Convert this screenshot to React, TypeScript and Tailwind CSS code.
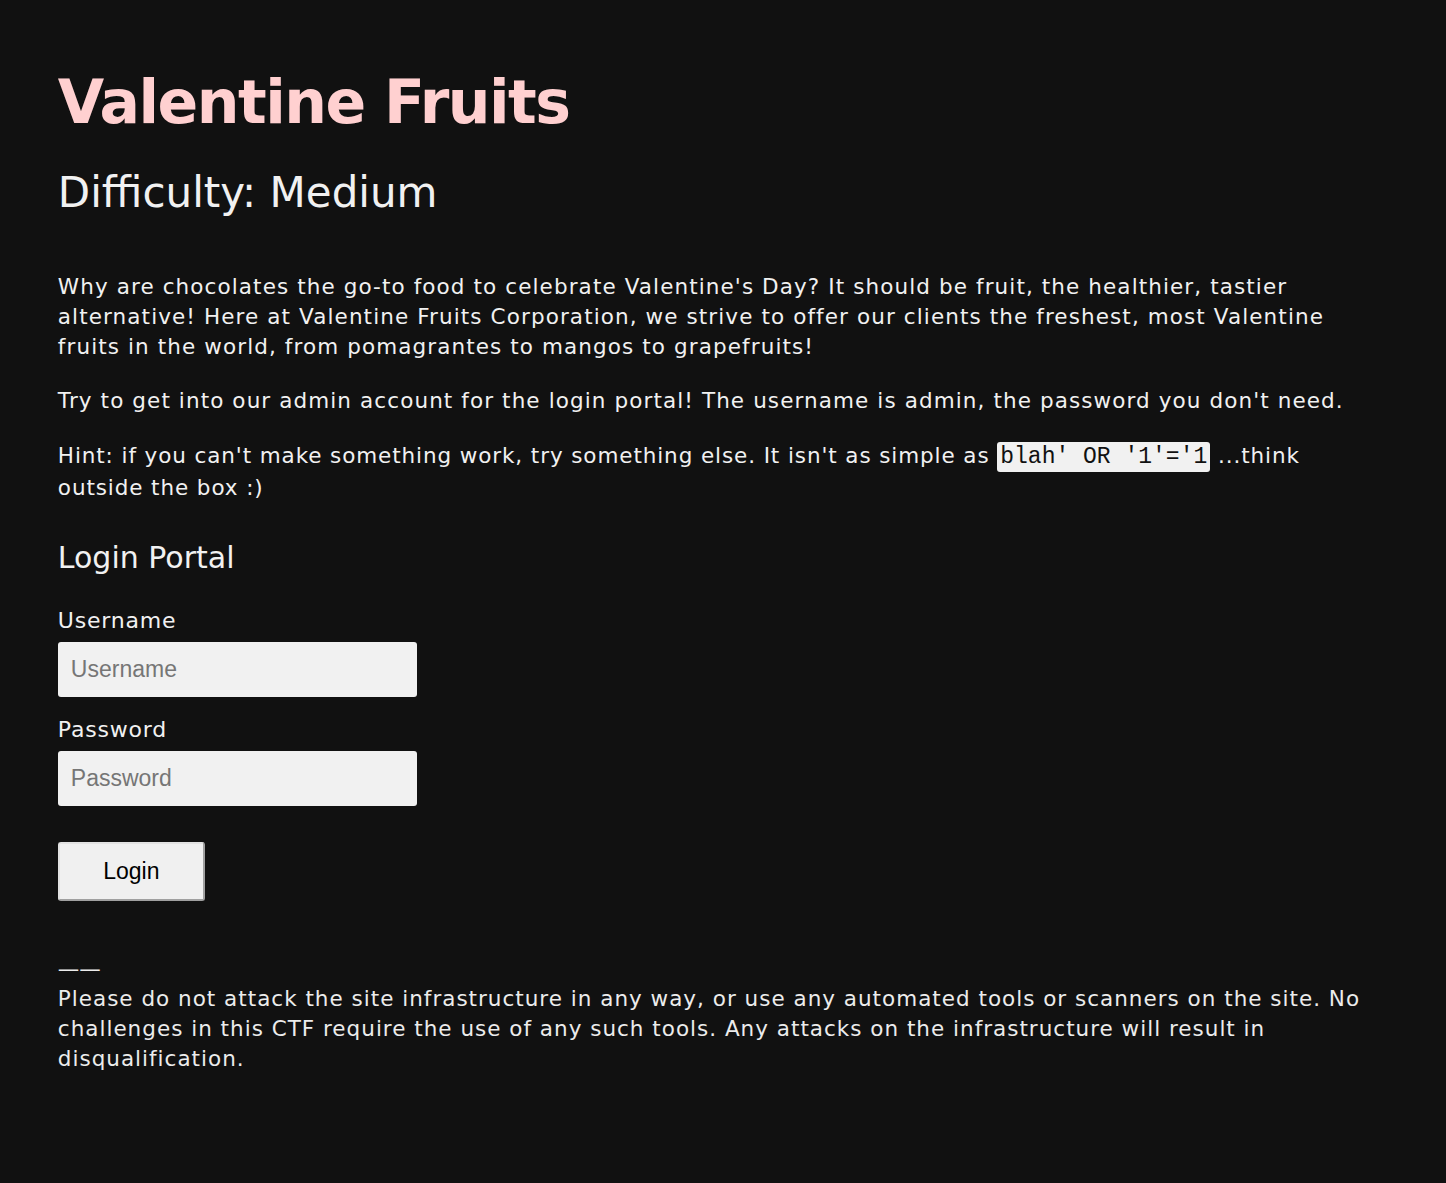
const App = () => {
  return (
    <div className="min-h-screen bg-[#111111] text-[#f1f1f1] px-[4%] pt-[58px] pb-24 font-['DejaVu_Sans',sans-serif]">
      {/* header */}
      <h1 className="text-[60px] leading-[88px] font-bold tracking-[-1.5px] text-[#ffd0d0]">Valentine Fruits</h1>
      <h2 className="mt-[19px] text-[42px] leading-[56px] font-normal">Difficulty: Medium</h2>

      {/* description */}
      <div className="mt-[51px] text-[21.5px] leading-[30px] tracking-[1.1px]">
        <p>
          Why are chocolates the go-to food to celebrate Valentine's Day? It should be fruit, the healthier, tastier
          alternative! Here at Valentine Fruits Corporation, we strive to offer our clients the freshest, most Valentine
          fruits in the world, from pomagrantes to mangos to grapefruits!
        </p>
        <p className="mt-6">
          Try to get into our admin account for the login portal! The username is admin, the password you don't need.
        </p>
        <p className="mt-6 leading-[32px] tracking-[0.9px]">
          Hint: if you can't make something work, try something else. It isn't as simple as{" "}
          <code className="bg-[#f1f1f1] text-[#111] rounded-[3px] px-[3px] py-[2px] font-['Liberation_Mono',monospace] text-[23px] leading-[28px] tracking-normal">
            blah' OR '1'='1
          </code>{" "}
          ...think outside the box :)
        </p>
      </div>

      {/* login */}
      <h3 className="mt-[34px] text-[30px] leading-[40px] font-medium">Login Portal</h3>
      <form className="mt-[27px] flex flex-col" onSubmit={(e) => e.preventDefault()}>
        <label className="text-[22px] leading-[32px] tracking-[0.8px]" htmlFor="username">
          Username
        </label>
        <input
          id="username"
          placeholder="Username"
          className="mt-[5px] w-[359px] h-[55px] bg-[#f1f1f1] rounded-[3px] px-[13px] text-[23px] text-black placeholder:text-[#767676] font-['Liberation_Sans',sans-serif] outline-none"
        />
        <label className="mt-[17px] text-[22px] leading-[32px] tracking-[0.8px]" htmlFor="password">
          Password
        </label>
        <input
          id="password"
          type="password"
          placeholder="Password"
          className="mt-[5px] w-[359px] h-[55px] bg-[#f1f1f1] rounded-[3px] px-[13px] text-[23px] text-black placeholder:text-[#767676] font-['Liberation_Sans',sans-serif] outline-none"
        />
        <button className="mt-[36px] w-[147px] h-[59px] bg-[#f0f0f0] text-black text-[23px] rounded-[3px] border-2 border-[#e2e2e2] border-r-[#a0a0a0] border-b-[#a0a0a0] font-['Liberation_Sans',sans-serif]">
          Login
        </button>
      </form>

      {/* footer */}
      <div className="mt-[53px] text-[21.5px] leading-[30px] tracking-[1px] text-[#ececec]">
        <p className="tracking-normal">——</p>
        <p>
          Please do not attack the site infrastructure in any way, or use any automated tools or scanners on the site. No
          challenges in this CTF require the use of any such tools. Any attacks on the infrastructure will result in
          disqualification.
        </p>
      </div>
    </div>
  );
};

export default App;
